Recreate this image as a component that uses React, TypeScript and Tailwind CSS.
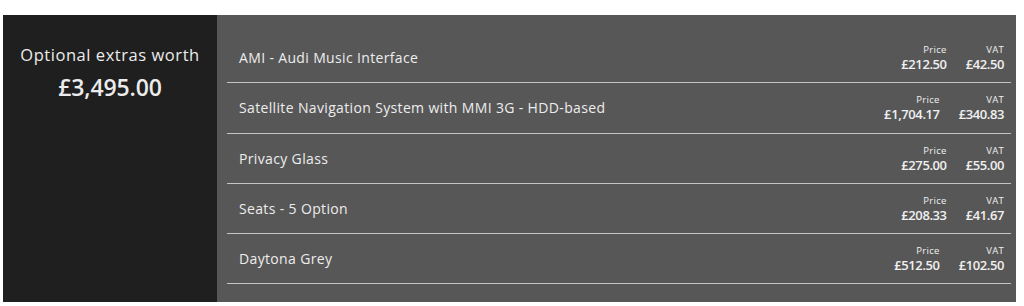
const extras = [
  { name: "AMI - Audi Music Interface", price: "£212.50", vat: "£42.50" },
  { name: "Satellite Navigation System with MMI 3G - HDD-based", price: "£1,704.17", vat: "£340.83" },
  { name: "Privacy Glass", price: "£275.00", vat: "£55.00" },
  { name: "Seats - 5 Option", price: "£208.33", vat: "£41.67" },
  { name: "Daytona Grey", price: "£512.50", vat: "£102.50" },
]

export default function App() {
  return (
    <div className="w-[1024px] h-[306px] bg-white pt-[15px] pl-[3px] font-['Open_Sans',sans-serif]">
      <div className="flex w-[1013px] h-[287px]">
        {/* total */}
        <div className="w-[214px] bg-[#1f1f1f] text-[#ececec] text-center pt-[29px]">
          <p className="text-[16.5px] leading-[22px] tracking-[0.55px]">Optional extras worth</p>
          <p className="text-[23px] leading-[30px] font-semibold tracking-[-0.1px] mt-[6px]">£3,495.00</p>
        </div>

        {/* list */}
        <div className="flex-1 bg-[#575757] py-[18px] pl-[10px] pr-[5px]">
          {extras.map((item) => (
            <div
              key={item.name}
              className="flex items-center justify-between h-[50.3px] border-b border-[#c4c4c4] pl-[12px] pr-[7px]"
            >
              <span className="text-[14px] tracking-[0.35px] text-[#ededed]">{item.name}</span>
              <div className="flex gap-[19px] text-right text-[#f0f0f0] pt-[2px]">
                <div className="flex flex-col items-end">
                  <span className="text-[9.5px] leading-[11px] font-medium tracking-[0.3px]">Price</span>
                  <span className="text-[13px] leading-[18px] font-semibold tracking-[-0.4px]">{item.price}</span>
                </div>
                <div className="flex flex-col items-end">
                  <span className="text-[9.5px] leading-[11px] font-medium tracking-[0.3px]">VAT</span>
                  <span className="text-[13px] leading-[18px] font-semibold tracking-[-0.4px]">{item.vat}</span>
                </div>
              </div>
            </div>
          ))}
        </div>
      </div>
    </div>
  )
}
